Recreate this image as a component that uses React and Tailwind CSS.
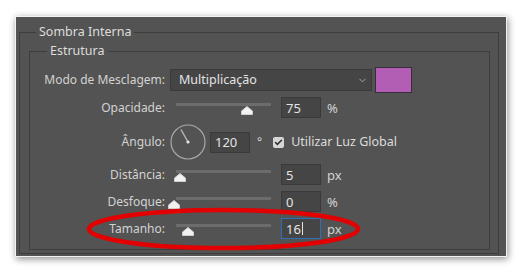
import { ChevronDown, Check } from 'lucide-react'

const font = "font-['Noto_Sans','Liberation_Sans',sans-serif]"

// Slider thumb offsets are measured from the track start, in px
const rows = [
  { label: 'Distância:', value: '5', unit: 'px', thumb: 4, mt: 'mt-[5px]' },
  { label: 'Desfoque:', value: '0', unit: '%', thumb: -2, mt: 'mt-[6px]' },
  { label: 'Tamanho:', value: '16', unit: 'px', thumb: 12, mt: 'mt-[6px]', focused: true },
]

function Label({ children }) {
  return <div className="w-[135px] shrink-0 text-right text-[#d2d2d2]">{children}</div>
}

function Slider({ thumb }) {
  return (
    <div className="relative ml-[11px] h-[21px] w-[95px] shrink-0">
      <div className="mt-[6px] h-[3px] w-full bg-[#6c6c6c]" />
      <svg
        className="absolute top-[9px]"
        style={{ left: thumb - 6 }}
        width="12"
        height="9"
        viewBox="0 0 12 9"
      >
        <path d="M6 0.5 L11.5 5 L11.5 8.5 L0.5 8.5 L0.5 5 Z" fill="#f2f2f2" stroke="#cfcfcf" strokeWidth="1" />
      </svg>
    </div>
  )
}

function NumberBox({ value, focused, className = '' }) {
  return (
    <div
      className={
        'flex h-[21px] w-[40px] shrink-0 items-center border bg-[#454545] pl-[4px] text-[13px] text-[#e4e4e4] ' +
        (focused ? 'border-[#2f6fb7] ' : 'border-[#3a3a3a] ') +
        className
      }
    >
      {value}
      {focused && <span className="ml-[1px] h-[13px] w-px bg-[#e4e4e4]" />}
    </div>
  )
}

export default function App() {
  return (
    <div className={'relative h-[274px] w-[522px] bg-white pl-[15px] pt-[16px] text-[12px] leading-[16px] ' + font}>
      <div className="h-[241px] w-[492px] border border-[#f2f2f2] bg-[#535353] pl-[3px] pt-[7px] shadow-[1px_2px_7px_rgba(0,0,0,0.45)]">
        <fieldset className="h-[230px] w-[480px] border border-[#3d3d3d]">
          <legend className="ml-[16px] px-[3px] text-[12.5px] text-[#dcdcdc]">Sombra Interna</legend>
          <fieldset className="ml-[9px] mt-[3px] h-[207px] w-[461px] border border-[#3d3d3d]">
            <legend className="ml-[17px] px-[3px] text-[12.5px] text-[#dcdcdc]">Estrutura</legend>

            <div className="mt-[8px] flex h-[26px] items-center">
              <Label>Modo de Mesclagem:</Label>
              <div className="ml-[5px] flex h-[22px] w-[202px] items-center justify-between border border-[#3a3a3a] bg-[#454545] pl-[8px] pr-[3px] text-[12.5px] text-[#e4e4e4]">
                <span>Multiplicação</span>
                <ChevronDown size={11} strokeWidth={2} color="#a8a8a8" />
              </div>
              <div className="ml-[3px] h-[26px] w-[37px] border border-[#3b2c3b] bg-[#b25eb4]" />
            </div>

            <div className="mt-[4px] flex h-[21px] items-center">
              <Label>Opacidade:</Label>
              <Slider thumb={71} />
              <NumberBox value="75" className="ml-[10px]" />
              <span className="ml-[6px] text-[13px] text-[#d2d2d2]">%</span>
            </div>

            <div className="mt-[7px] flex h-[34px] items-center">
              <Label>Ângulo:</Label>
              <svg className="ml-[5px] shrink-0" width="36" height="36" viewBox="0 0 36 36">
                <circle cx="18" cy="18" r="17" fill="none" stroke="#a9a9a9" strokeWidth="1.2" />
                <line x1="18" y1="18" x2="11" y2="5.5" stroke="#b8b8b8" strokeWidth="1.4" />
                <circle cx="18" cy="18" r="1.6" fill="#e6e6e6" />
              </svg>
              <NumberBox value="120" className="ml-[4px]" />
              <span className="ml-[7px] text-[#d2d2d2]">°</span>
              <div className="ml-[11px] flex h-[11px] w-[11px] shrink-0 items-center justify-center rounded-[2px] bg-[#d6d6d6]">
                <Check size={9} strokeWidth={4} color="#303030" />
              </div>
              <span className="ml-[7px] text-[12.5px] text-[#dcdcdc]">Utilizar Luz Global</span>
            </div>

            {rows.map((r) => (
              <div key={r.label} className={r.mt + ' flex h-[21px] items-center'}>
                <Label>{r.label}</Label>
                <Slider thumb={r.thumb} />
                <NumberBox value={r.value} focused={r.focused} className="ml-[10px]" />
                <span className="ml-[6px] text-[13px] text-[#d2d2d2]">{r.unit}</span>
              </div>
            ))}
          </fieldset>
        </fieldset>
      </div>

      {/* red marker drawn over the Tamanho row */}
      <svg className="pointer-events-none absolute left-0 top-0" width="522" height="274">
        <ellipse cx="223.5" cy="229" rx="134.5" ry="19" fill="none" stroke="#e30000" strokeWidth="4.5" />
      </svg>
    </div>
  )
}
